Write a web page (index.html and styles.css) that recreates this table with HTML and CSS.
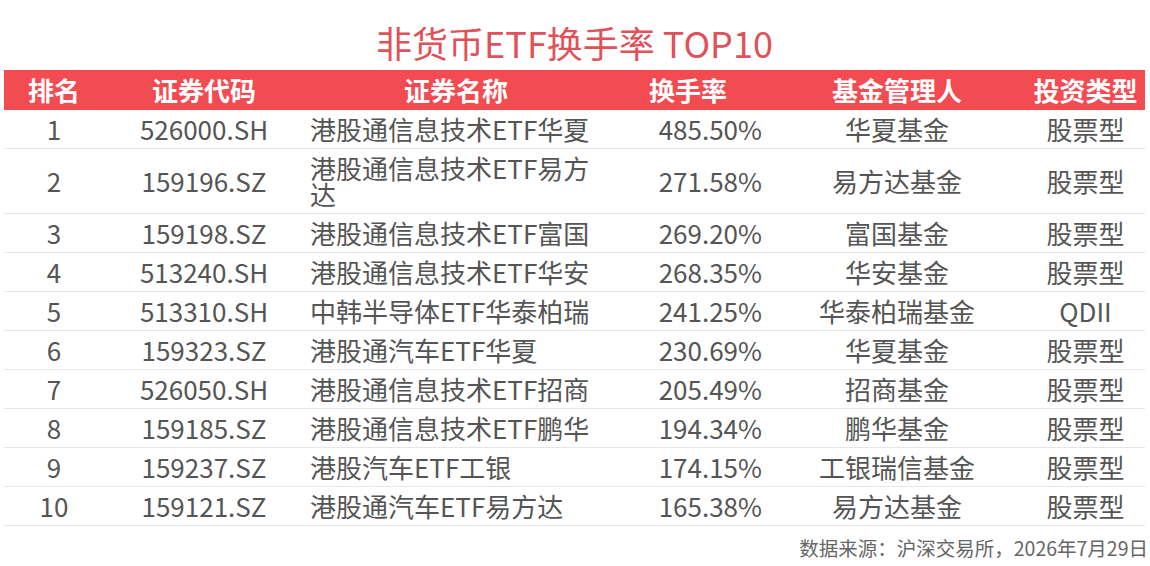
FILE: index.html
```html
<!DOCTYPE html>
<html lang="zh-CN">
<head>
<meta charset="utf-8">
<title>非货币ETF换手率 TOP10</title>
<link rel="stylesheet" href="styles.css">
</head>
<body>
<div class="page">
  <h1 class="title">非货币ETF换手率 TOP10</h1>
  <table class="rank-table">
    <colgroup>
      <col class="c-rank"><col class="c-code"><col class="c-name"><col class="c-rate"><col class="c-mgr"><col class="c-type">
    </colgroup>
    <thead>
      <tr><th>排名</th><th>证券代码</th><th>证券名称</th><th>换手率</th><th>基金管理人</th><th>投资类型</th></tr>
    </thead>
    <tbody>
      <tr><td>1</td><td>526000.SH</td><td class="name">港股通信息技术ETF华夏</td><td class="rate">485.50%</td><td>华夏基金</td><td>股票型</td></tr>
      <tr><td>2</td><td>159196.SZ</td><td class="name">港股通信息技术ETF易方达</td><td class="rate">271.58%</td><td>易方达基金</td><td>股票型</td></tr>
      <tr><td>3</td><td>159198.SZ</td><td class="name">港股通信息技术ETF富国</td><td class="rate">269.20%</td><td>富国基金</td><td>股票型</td></tr>
      <tr><td>4</td><td>513240.SH</td><td class="name">港股通信息技术ETF华安</td><td class="rate">268.35%</td><td>华安基金</td><td>股票型</td></tr>
      <tr><td>5</td><td>513310.SH</td><td class="name">中韩半导体ETF华泰柏瑞</td><td class="rate">241.25%</td><td>华泰柏瑞基金</td><td>QDII</td></tr>
      <tr><td>6</td><td>159323.SZ</td><td class="name">港股通汽车ETF华夏</td><td class="rate">230.69%</td><td>华夏基金</td><td>股票型</td></tr>
      <tr><td>7</td><td>526050.SH</td><td class="name">港股通信息技术ETF招商</td><td class="rate">205.49%</td><td>招商基金</td><td>股票型</td></tr>
      <tr><td>8</td><td>159185.SZ</td><td class="name">港股通信息技术ETF鹏华</td><td class="rate">194.34%</td><td>鹏华基金</td><td>股票型</td></tr>
      <tr><td>9</td><td>159237.SZ</td><td class="name">港股汽车ETF工银</td><td class="rate">174.15%</td><td>工银瑞信基金</td><td>股票型</td></tr>
      <tr><td>10</td><td>159121.SZ</td><td class="name">港股通汽车ETF易方达</td><td class="rate">165.38%</td><td>易方达基金</td><td>股票型</td></tr>
    </tbody>
  </table>
  <p class="source">数据来源：沪深交易所，2026年7月29日</p>
</div>
</body>
</html>
```
FILE: styles.css
```css
html, body {
  margin: 0;
  padding: 0;
  background: #ffffff;
}
body {
  font-family: "Noto Sans CJK SC", "Noto Sans", sans-serif;
  color: #555555;
}
.page {
  width: 1150px;
  padding: 0 5px 0 4px;
  box-sizing: border-box;
}
.title {
  margin: 0;
  padding-top: 17px;
  height: 70px;
  box-sizing: border-box;
  line-height: 50px;
  font-size: 36px;
  font-weight: 400;
  color: #e0525a;
  text-align: center;
  white-space: nowrap;
}
.rank-table {
  width: 1141px;
  border-collapse: collapse;
  table-layout: fixed;
}
.c-rank { width: 100px; }
.c-code { width: 200px; }
.c-name { width: 304px; }
.c-rate { width: 160px; }
.c-mgr { width: 258px; }
.c-type { width: 119px; }
.rank-table th {
  background: #f24b52;
  color: #ffffff;
  font-size: 26px;
  font-weight: 700;
  height: 40px;
  padding: 0;
  line-height: 40px;
  text-align: center;
  white-space: nowrap;
}
.rank-table td {
  font-size: 26px;
  line-height: 26px;
  padding: 6px 6px;
  text-align: center;
  border-bottom: 1px solid #e6e6e6;
  color: #555555;
}
.rank-table td.name {
  text-align: left;
}
.rank-table td.rate {
  text-align: right;
}
.source {
  margin: 9px -3px 0 0;
  font-size: 19.5px;
  line-height: 26px;
  color: #666666;
  text-align: right;
  white-space: nowrap;
}
```
